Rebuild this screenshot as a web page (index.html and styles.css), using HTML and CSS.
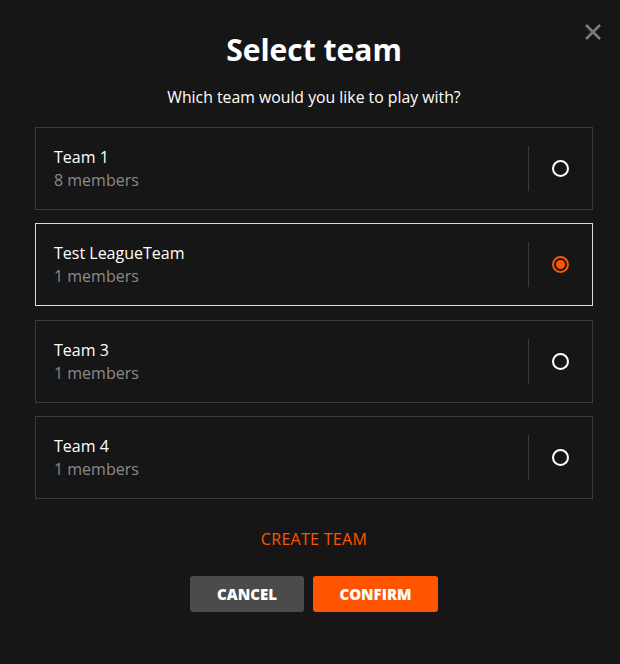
FILE: index.html
```html
<!DOCTYPE html>
<html lang="en">
<head>
<meta charset="utf-8">
<title>Select team</title>
<link rel="stylesheet" href="styles.css">
</head>
<body>
<div class="dialog">
  <button class="close" aria-label="Close">
    <svg width="18" height="18" viewBox="0 0 18 18"><path d="M2 2 L16 16 M16 2 L2 16" stroke="#7b7b7b" stroke-width="2.6" fill="none"/></svg>
  </button>
  <h1 class="title">Select team</h1>
  <p class="subtitle">Which team would you like to play with?</p>
  <div class="teams">
    <div class="team">
      <div class="info"><div class="name">Team 1</div><div class="members">8 members</div></div>
      <div class="divider"></div>
      <div class="pick"><span class="radio"></span></div>
    </div>
    <div class="team selected">
      <div class="info"><div class="name">Test LeagueTeam</div><div class="members">1 members</div></div>
      <div class="divider"></div>
      <div class="pick"><span class="radio on"></span></div>
    </div>
    <div class="team">
      <div class="info"><div class="name">Team 3</div><div class="members">1 members</div></div>
      <div class="divider"></div>
      <div class="pick"><span class="radio"></span></div>
    </div>
    <div class="team">
      <div class="info"><div class="name">Team 4</div><div class="members">1 members</div></div>
      <div class="divider"></div>
      <div class="pick"><span class="radio"></span></div>
    </div>
  </div>
  <div class="create">CREATE TEAM</div>
  <div class="actions">
    <button class="btn cancel">CANCEL</button>
    <button class="btn confirm">CONFIRM</button>
  </div>
</div>
</body>
</html>
```
FILE: styles.css
```css
html, body {
  margin: 0;
  padding: 0;
  background: #161616;
}
body {
  font-family: "Open Sans", "Noto Sans", sans-serif;
  color: #ffffff;
  width: 620px;
  height: 664px;
}
.dialog {
  position: relative;
  padding: 30px 27px 0 35px;
  display: flex;
  flex-direction: column;
  align-items: stretch;
}
.close {
  position: absolute;
  top: 23px;
  right: 18px;
  background: none;
  border: 0;
  padding: 0;
  width: 18px;
  height: 18px;
  display: flex;
}
.title {
  margin: 0;
  text-align: center;
  font-size: 30px;
  font-weight: 700;
  line-height: 40px;
  letter-spacing: 0;
}
.subtitle {
  margin: 16px 0 0;
  text-align: center;
  font-size: 15.8px;
  line-height: 22px;
}
.teams {
  margin-top: 19px;
  display: flex;
  flex-direction: column;
  gap: 13.3px;
}
.team {
  box-sizing: border-box;
  height: 83px;
  border: 1px solid #3b3b3b;
  display: flex;
  align-items: center;
}
.team.selected {
  border-color: #d9d9d9;
}
.info {
  flex: 1;
  padding-left: 18px;
}
.name {
  font-size: 16px;
  line-height: 22px;
  color: #ffffff;
}
.members {
  font-size: 16px;
  line-height: 22px;
  color: #8a8a8a;
  margin-top: 1px;
}
.divider {
  width: 1px;
  height: 45px;
  background: #3b3b3b;
}
.pick {
  width: 63px;
  display: flex;
  justify-content: center;
  align-items: center;
}
.radio {
  box-sizing: border-box;
  width: 17px;
  height: 17px;
  border-radius: 50%;
  border: 2px solid #ffffff;
  display: flex;
  align-items: center;
  justify-content: center;
}
.radio.on {
  border-color: #ff5500;
}
.radio.on::after {
  content: "";
  width: 9px;
  height: 9px;
  border-radius: 50%;
  background: #ff5500;
}
.create {
  margin-top: 29px;
  text-align: center;
  color: #ff5500;
  font-size: 16px;
  letter-spacing: 0.3px;
  line-height: 22px;
}
.actions {
  margin-top: 26px;
  display: flex;
  justify-content: center;
  gap: 9px;
}
.btn {
  height: 36px;
  border: 0;
  border-radius: 3px;
  color: #ffffff;
  font-family: "Open Sans", "Noto Sans", sans-serif;
  font-weight: 800;
  font-size: 15px;
  padding: 0;
}
.cancel {
  width: 114px;
  background: #4b4b4b;
}
.confirm {
  width: 125px;
  background: #ff5500;
}
```
